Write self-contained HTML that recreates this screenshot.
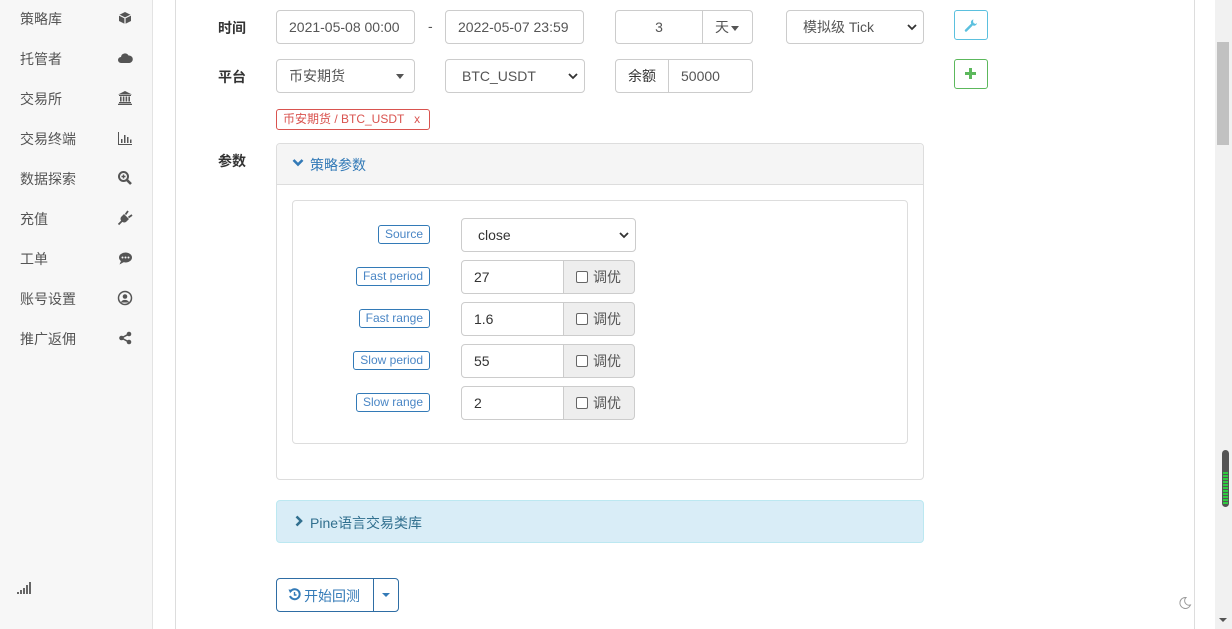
<!DOCTYPE html>
<html><head><meta charset="utf-8"><style>
*{box-sizing:border-box;margin:0;padding:0}
body{width:1232px;height:629px;overflow:hidden;background:#fff;font-family:"Liberation Sans","Noto Sans CJK SC",sans-serif;font-size:14px;color:#333;position:relative}
.a{position:absolute}
.side{left:0;top:0;width:153px;height:629px;background:#f7f7f7;border-right:1px solid #e3e3e3}
.si{position:absolute;left:20px;font-size:14px;color:#555}
.ic{position:absolute;left:117px;width:16px;height:16px}
.inp{position:absolute;border:1px solid #ccc;border-radius:4px;height:34px;line-height:32px;padding:0 12px;background:#fff;color:#555;font-size:14px}
.lbl{position:absolute;font-weight:bold;color:#333;font-size:14px}
.car{display:inline-block;border-top:5px solid #555;border-left:4px solid transparent;border-right:4px solid transparent;vertical-align:middle}
.pl{position:absolute;right:802px;border:1px solid #337ab7;border-radius:3px;color:#4a86c5;font-size:12px;height:19px;line-height:16px;padding:0 6px;background:#fff}
.addon{position:absolute;background:#eee;border:1px solid #ccc;border-radius:0 4px 4px 0;height:34px;line-height:32px;padding-left:12px;color:#555}
.cb{display:inline-block;width:12px;height:12px;border:1px solid #666;border-radius:2px;vertical-align:-1px;margin-right:5px;background:#fff}
</style></head><body>
<div class="a side"></div>
<div class="a" style="left:175px;top:0;width:1px;height:629px;background:#ddd"></div>
<div class="a" style="left:1194px;top:0;width:1px;height:629px;background:#ddd"></div>
<div class="a" style="left:1215px;top:0;width:17px;height:629px;background:#f1f1f1"></div>
<div class="a" style="left:1217px;top:42px;width:12px;height:103px;background:#c1c1c1;border-radius:0"></div>
<div class="a" style="left:1222px;top:450px;width:7px;height:57px;background:#555;border-radius:4px"></div>
<div class="a" style="left:1223px;top:472px;width:5px;height:33px;background:repeating-linear-gradient(#2ecc40 0 2px,#555 2px 3px)"></div>
<div class="a" style="left:1219px;top:618px;border-top:4px solid #555;border-left:4px solid transparent;border-right:4px solid transparent"></div>
<svg class="a" style="left:1178px;top:596px" width="14" height="14" viewBox="0 0 14 14"><path d="M8 1.5A5.5 5.5 0 1 0 12.5 9 4.5 4.5 0 0 1 8 1.5Z" fill="none" stroke="#999" stroke-width="1"/></svg>

<div class="si" style="top:9px">策略库</div>
<div class="si" style="top:49px">托管者</div>
<div class="si" style="top:89px">交易所</div>
<div class="si" style="top:129px">交易终端</div>
<div class="si" style="top:169px">数据探索</div>
<div class="si" style="top:209px">充值</div>
<div class="si" style="top:249px">工单</div>
<div class="si" style="top:289px">账号设置</div>
<div class="si" style="top:329px">推广返佣</div>
<svg class="ic" style="top:10px" viewBox="0 0 16 16"><path d="M8 2l6 3v6l-6 3-6-3V5z" fill="#555"/><path d="M2 5l6 3 6-3M8 8v6" stroke="#f7f7f7" stroke-width="1.2" fill="none"/></svg>
<svg class="ic" style="top:50px" viewBox="0 0 16 16"><path d="M4 13a3 3 0 0 1 0-6 4 4 0 0 1 7.5-1.5A3.5 3.5 0 0 1 12.5 13z" fill="#555"/></svg>
<svg class="ic" style="top:90px" viewBox="0 0 16 16"><path d="M8 1l7 3.5H1zM2 5h12v1H2zM3 6.5h1.6v5H3zM5.8 6.5h1.6v5H5.8zM8.6 6.5h1.6v5H8.6zM11.4 6.5H13v5h-1.6zM2 12h12v1.3H2zM1 13.8h14V15H1z" fill="#555"/></svg>
<svg class="ic" style="top:130px" viewBox="0 0 16 16"><path d="M1 2h1v12h13v1H1zM4 9h1.5v4H4zM7 5h1.5v8H7zM10 7h1.5v6H10zM13 9.5h1.5V13H13z" fill="#555"/></svg>
<svg class="ic" style="top:170px" viewBox="0 0 16 16"><circle cx="6.5" cy="6.5" r="4.5" fill="none" stroke="#555" stroke-width="2"/><path d="M10 10l4 4" stroke="#555" stroke-width="2.6"/><path d="M4.5 6.5h4M6.5 4.5v4" stroke="#555" stroke-width="1.4"/></svg>
<svg class="ic" style="top:210px" viewBox="0 0 16 16"><path d="M11 1l-2.5 3.5M15 5l-3.5 2.5" stroke="#555" stroke-width="1.8"/><path d="M7 4l5 5-2.5 2.5a3 3 0 0 1-4.5 0L4.5 11a3 3 0 0 1 0-4.5z" fill="#555"/><path d="M5 11l-3.5 3.5" stroke="#555" stroke-width="1.8"/></svg>
<svg class="ic" style="top:250px" viewBox="0 0 16 16"><ellipse cx="8.5" cy="7.5" rx="6.5" ry="5" fill="#555"/><path d="M4 11l-1.5 3.5L7 12z" fill="#555"/><circle cx="5.5" cy="7.5" r="1" fill="#f7f7f7"/><circle cx="8.5" cy="7.5" r="1" fill="#f7f7f7"/><circle cx="11.5" cy="7.5" r="1" fill="#f7f7f7"/></svg>
<svg class="ic" style="top:290px" viewBox="0 0 16 16"><circle cx="8" cy="8" r="6.5" fill="none" stroke="#555" stroke-width="1.5"/><circle cx="8" cy="6.5" r="2.3" fill="#555"/><path d="M3.8 12.5a4.5 4 0 0 1 8.4 0z" fill="#555"/></svg>
<svg class="ic" style="top:330px" viewBox="0 0 16 16"><circle cx="12" cy="4" r="2.3" fill="#555"/><circle cx="12" cy="12" r="2.3" fill="#555"/><circle cx="4.5" cy="8" r="2.3" fill="#555"/><path d="M12 4L4.5 8 12 12" stroke="#555" stroke-width="1.5" fill="none"/></svg>
<svg class="a" style="left:17px;top:582px" width="15" height="12" viewBox="0 0 15 12"><path d="M0 10h2v2H0zM3 8h2v4H3zM6 6h2v6H6zM9 3h2v9H9zM12 0h2v12h-2z" fill="#666"/></svg>

<div class="lbl" style="left:218px;top:18px">时间</div>
<div class="lbl" style="left:218px;top:67px">平台</div>
<div class="lbl" style="left:218px;top:151px">参数</div>

<div class="inp" style="left:276px;top:10px;width:139px">2021-05-08 00:00</div>
<div class="a" style="left:428px;top:18px;color:#555">-</div>
<div class="inp" style="left:445px;top:10px;width:139px">2022-05-07 23:59</div>
<div class="inp" style="left:615px;top:10px;width:88px;border-radius:4px 0 0 4px;text-align:center">3</div>
<div class="inp" style="left:702px;top:10px;width:51px;border-radius:0 4px 4px 0;padding:0 0 0 12px">天<span class="car" style="margin-left:2px"></span></div>
<div class="inp" style="left:786px;top:10px;width:138px;padding-left:16px">模拟级 Tick<svg class="a" style="right:6px;top:13px" width="10" height="7" viewBox="0 0 10 7"><path d="M1 1l4 4 4-4" stroke="#333" stroke-width="1.8" fill="none"/></svg></div>
<div class="a" style="left:954px;top:10px;width:34px;height:30px;border:1px solid #5bc0de;border-radius:3px"></div>
<svg class="a" style="left:964px;top:18px" width="14" height="14" viewBox="0 0 14 14"><path d="M2 12.5L7.5 7" stroke="#5bc0de" stroke-width="2.4" stroke-linecap="round"/><path d="M9.5 1.5a3 3 0 0 0-2.5 4l2 2a3 3 0 0 0 4-2.5l-1.5 1-2-1-0.5-2z" fill="#5bc0de"/></svg>
<div class="a" style="left:954px;top:59px;width:34px;height:30px;border:1px solid #5cb85c;border-radius:3px"></div>
<svg class="a" style="left:964px;top:67px" width="13" height="13" viewBox="0 0 13 13"><path d="M5 1h3v4h4v3H8v4H5V8H1V5h4z" fill="#5cb85c"/></svg>

<div class="inp" style="left:276px;top:59px;width:139px">币安期货<span class="car a" style="right:10px;top:14px"></span></div>
<div class="inp" style="left:445px;top:59px;width:140px;padding-left:16px">BTC_USDT<svg class="a" style="right:6px;top:13px" width="10" height="7" viewBox="0 0 10 7"><path d="M1 1l4 4 4-4" stroke="#333" stroke-width="1.8" fill="none"/></svg></div>
<div class="inp" style="left:615px;top:59px;width:54px;border-radius:4px 0 0 4px;background:#fff;color:#333">余额</div>
<div class="inp" style="left:668px;top:59px;width:85px;border-radius:0 4px 4px 0">50000</div>

<div class="a" style="left:276px;top:109px;width:154px;height:21px;border:1px solid #d9534f;border-radius:3px;color:#d9534f;font-size:12px;line-height:18px;padding-left:6px">币安期货 / BTC_USDT &nbsp;&nbsp;x</div>

<div class="a" style="left:276px;top:143px;width:648px;height:337px;border:1px solid #ddd;border-radius:4px"></div>
<div class="a" style="left:277px;top:144px;width:646px;height:41px;background:#f5f5f5;border-bottom:1px solid #ddd;border-radius:4px 4px 0 0"></div>
<svg class="a" style="left:292px;top:158px" width="12" height="10" viewBox="0 0 12 10"><path d="M1.5 2l4.5 4.5L10.5 2" stroke="#337ab7" stroke-width="2.6" fill="none"/></svg>
<div class="a" style="left:310px;top:155px;color:#337ab7">策略参数</div>
<div class="a" style="left:292px;top:200px;width:616px;height:244px;border:1px solid #ddd;border-radius:4px"></div>

<div class="pl" style="top:225px">Source</div>
<div class="inp" style="left:461px;top:218px;width:175px;padding-left:16px;color:#333">close<svg class="a" style="right:6px;top:13px" width="10" height="7" viewBox="0 0 10 7"><path d="M1 1l4 4 4-4" stroke="#333" stroke-width="1.8" fill="none"/></svg></div>

<div class="pl" style="top:267px">Fast period</div>
<div class="inp" style="left:461px;top:260px;width:103px;border-radius:4px 0 0 4px;color:#333">27</div>
<div class="addon" style="left:563px;top:260px;width:72px"><span class="cb"></span>调优</div>
<div class="pl" style="top:309px">Fast range</div>
<div class="inp" style="left:461px;top:302px;width:103px;border-radius:4px 0 0 4px;color:#333">1.6</div>
<div class="addon" style="left:563px;top:302px;width:72px"><span class="cb"></span>调优</div>
<div class="pl" style="top:351px">Slow period</div>
<div class="inp" style="left:461px;top:344px;width:103px;border-radius:4px 0 0 4px;color:#333">55</div>
<div class="addon" style="left:563px;top:344px;width:72px"><span class="cb"></span>调优</div>
<div class="pl" style="top:393px">Slow range</div>
<div class="inp" style="left:461px;top:386px;width:103px;border-radius:4px 0 0 4px;color:#333">2</div>
<div class="addon" style="left:563px;top:386px;width:72px"><span class="cb"></span>调优</div>

<div class="a" style="left:276px;top:500px;width:648px;height:43px;background:#d9edf7;border:1px solid #bce8f1;border-radius:4px"></div>
<svg class="a" style="left:295px;top:515px" width="8" height="12" viewBox="0 0 8 12"><path d="M1.5 1.5L6 6l-4.5 4.5" stroke="#31708f" stroke-width="2.6" fill="none"/></svg>
<div class="a" style="left:310px;top:513px;color:#31708f">Pine语言交易类库</div>

<div class="a" style="left:276px;top:578px;width:123px;height:34px;border:1px solid #2e6da4;border-radius:4px"></div>
<div class="a" style="left:373px;top:578px;width:1px;height:34px;background:#2e6da4"></div>
<svg class="a" style="left:288px;top:588px" width="13" height="13" viewBox="0 0 13 13"><path d="M2.5 3.5A5 5 0 1 1 2 8" stroke="#337ab7" stroke-width="2" fill="none"/><path d="M0.5 1.5l4 0.3-2.3 3.4z" fill="#337ab7"/><path d="M6.5 4v3h2" stroke="#337ab7" stroke-width="1.4" fill="none"/></svg>
<div class="a" style="left:304px;top:586px;color:#337ab7">开始回测</div>
<div class="a" style="left:382px;top:593px;border-top:4px solid #337ab7;border-left:4px solid transparent;border-right:4px solid transparent"></div>
</body></html>
